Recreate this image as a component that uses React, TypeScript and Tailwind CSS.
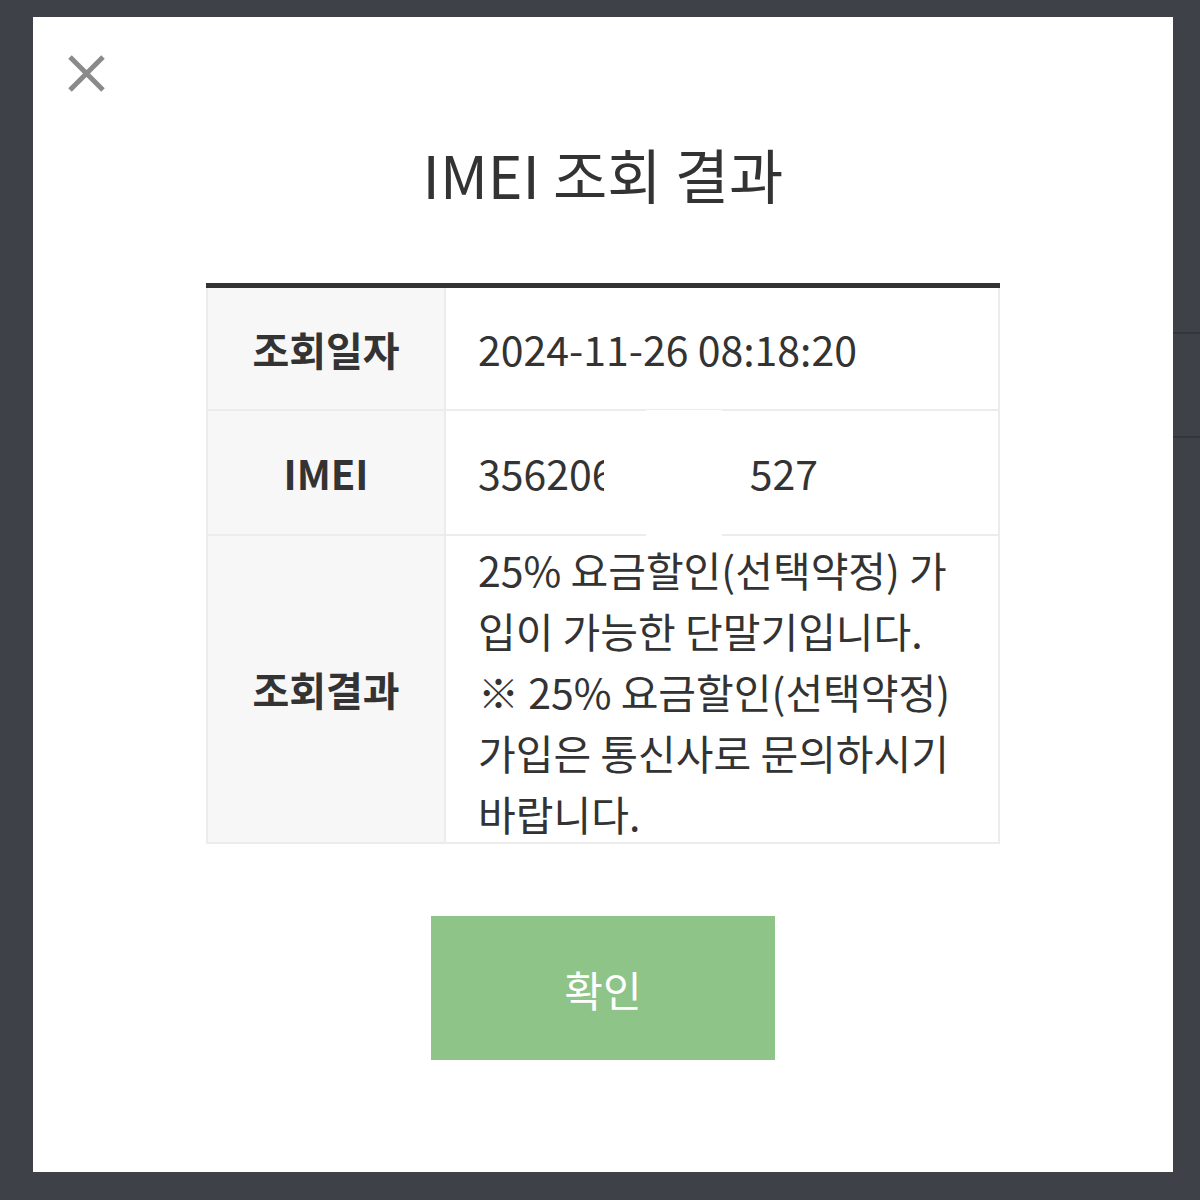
const font = "font-['Noto_Sans_CJK_KR','Noto_Sans',sans-serif]"

function CloseIcon() {
  return (
    <svg width="37" height="37" viewBox="0 0 37 37" fill="none">
      <line x1="2" y1="2" x2="35" y2="35" stroke="#8a8a8a" strokeWidth="5" />
      <line x1="35" y1="2" x2="2" y2="35" stroke="#8a8a8a" strokeWidth="5" />
    </svg>
  )
}

export default function App() {
  return (
    <main className={`relative w-[1200px] h-[1200px] bg-[#3f4149] pt-[17px] pl-[33px] overflow-hidden ${font}`}>
      {/* page behind the modal */}
      <div className="absolute right-0 top-[332px] w-[40px] h-[2px] bg-[#34363c]" />
      <div className="absolute right-0 top-[436px] w-[40px] h-[2px] bg-[#34363c]" />

      <div className="relative w-[1140px] h-[1155px] bg-white">
        <button className="absolute left-[35px] top-[38px]">
          <CloseIcon />
        </button>

        <h1 className="pt-[115px] text-center text-[59px] leading-[83px] font-normal text-[#333]">
          IMEI 조회 결과
        </h1>

        {/* table */}
        <div className="relative mt-[68px] mx-auto w-[794px] border-t-[5px] border-[#333] text-[#333]">
          <div className="grid grid-cols-[238px_1fr] border-l-2 border-r-2 border-b-2 border-[#ececec]">
            <div className="h-[123px] flex items-center justify-center bg-[#f7f7f7] border-r-2 border-b-2 border-[#ececec] text-[40px] font-bold">
              조회일자
            </div>
            <div className="h-[123px] flex items-center pl-[32px] border-b-2 border-[#ececec] text-[41px]">
              2024-11-26 08:18:20
            </div>

            <div className="h-[125px] flex items-center justify-center bg-[#f7f7f7] border-r-2 border-b-2 border-[#ececec] text-[40px] font-bold">
              IMEI
            </div>
            <div className="h-[125px] flex items-center pl-[32px] border-b-2 border-[#ececec] text-[41px]">
              <span>35620</span>
              <span className="inline-block w-[12px] overflow-hidden">6</span>
              <span className="ml-[146px]">527</span>
            </div>

            <div className="h-[306px] flex items-center justify-center bg-[#f7f7f7] border-r-2 border-[#ececec] text-[40px] font-bold">
              조회결과
            </div>
            <div className="h-[306px] pl-[32px] pt-[3px] text-[41px] leading-[61px] whitespace-nowrap">
              <p>25% 요금할인(선택약정) 가</p>
              <p>입이 가능한 단말기입니다.</p>
              <p>※ 25% 요금할인(선택약정)</p>
              <p>가입은 통신사로 문의하시기</p>
              <p>바랍니다.</p>
            </div>
          </div>
          {/* redacted part of the IMEI */}
          <div className="absolute left-[440px] top-[122px] w-[76px] h-[136px] bg-white" />
        </div>

        <button className="block mt-[72px] mx-auto w-[344px] h-[144px] bg-[#8fc489] text-white text-[42px]">
          확인
        </button>
      </div>
    </main>
  )
}
